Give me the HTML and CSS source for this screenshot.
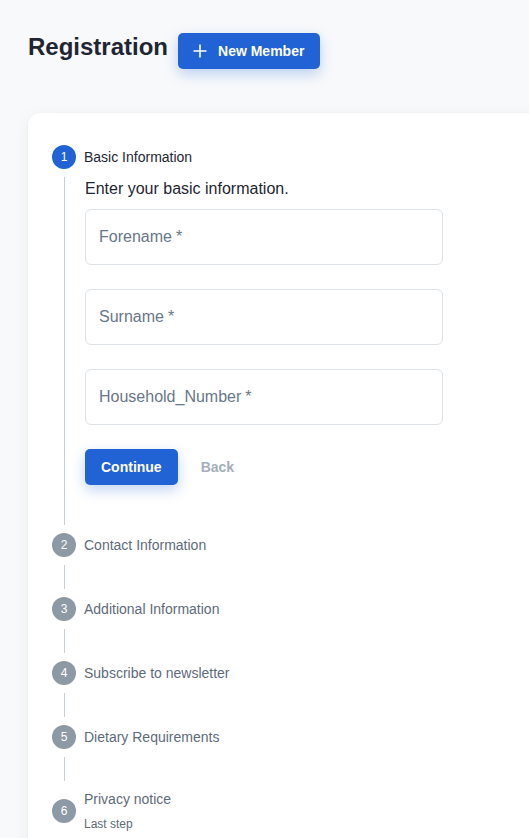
FILE: index.html
```html
<!DOCTYPE html>
<html lang="en">
<head>
<meta charset="utf-8">
<title>Registration</title>
<link rel="stylesheet" href="styles.css">
</head>
<body>
<div class="page">
  <header class="page-head">
    <h1 class="page-title">Registration</h1>
    <button class="btn btn-primary btn-new" type="button">
      <svg class="plus" viewBox="0 0 14 14" width="14" height="14" aria-hidden="true"><path d="M7 0.5V13.5M0.5 7H13.5" stroke="#fff" stroke-width="1.6" fill="none"/></svg>
      <span>New Member</span>
    </button>
  </header>

  <section class="card">
    <div class="step step-active">
      <div class="step-head"><span class="dot dot-active">1</span><div class="step-label">Basic Information</div></div>
      <div class="step-body">
        <p class="step-desc">Enter your basic information.</p>
        <div class="field"><span class="ph">Forename<span class="req">*</span></span></div>
        <div class="field"><span class="ph">Surname<span class="req">*</span></span></div>
        <div class="field"><span class="ph">Household_Number<span class="req">*</span></span></div>
        <div class="actions">
          <button class="btn btn-primary btn-continue" type="button">Continue</button>
          <button class="btn btn-text" type="button">Back</button>
        </div>
      </div>
    </div>
    <div class="step">
      <div class="step-head"><span class="dot">2</span><div class="step-label">Contact Information</div></div>
      <div class="step-body step-body-empty"></div>
    </div>
    <div class="step">
      <div class="step-head"><span class="dot">3</span><div class="step-label">Additional Information</div></div>
      <div class="step-body step-body-empty"></div>
    </div>
    <div class="step">
      <div class="step-head"><span class="dot">4</span><div class="step-label">Subscribe to newsletter</div></div>
      <div class="step-body step-body-empty"></div>
    </div>
    <div class="step">
      <div class="step-head"><span class="dot">5</span><div class="step-label">Dietary Requirements</div></div>
      <div class="step-body step-body-empty"></div>
    </div>
    <div class="step">
      <div class="step-head step-head-tall"><span class="dot">6</span>
        <div class="step-label">Privacy notice<div class="step-sub">Last step</div></div>
      </div>
    </div>
  </section>
</div>
</body>
</html>
```

FILE: styles.css
```css
html, body {
  margin: 0;
  padding: 0;
  overflow: hidden;
}
body {
  background: #f8f9fb;
  font-family: "Liberation Sans", Arial, sans-serif;
  color: #1f2430;
}
.page {
  padding: 33px 0 0 28px;
}
.page-head {
  display: flex;
  align-items: flex-start;
  gap: 10px;
}
.page-title {
  margin: 0;
  font-size: 24px;
  line-height: 28px;
  font-weight: 700;
  color: #1f2633;
}
.btn {
  font-family: "Liberation Sans", Arial, sans-serif;
  font-size: 14px;
  font-weight: 700;
  border: none;
  cursor: pointer;
  height: 36px;
  border-radius: 5px;
  display: inline-flex;
  align-items: center;
}
.btn-primary {
  background: #2163d5;
  color: #fff;
  box-shadow: 0 5px 14px rgba(33, 99, 213, 0.28);
}
.btn-new {
  padding: 0 16px 0 15px;
  gap: 11px;
}
.plus { display: block; }
.card {
  margin-top: 44px;
  width: 540px;
  background: #fff;
  border-radius: 12px;
  box-shadow: 0 0 2px rgba(20, 30, 50, 0.06), 0 4px 18px rgba(20, 30, 50, 0.05);
  padding: 32px 0 40px 24px;
  min-height: 760px;
}
.step-head {
  display: flex;
  align-items: center;
  gap: 8px;
  height: 24px;
}
.step-head-tall {
  height: 44px;
}
.dot {
  flex: none;
  width: 24px;
  height: 24px;
  border-radius: 50%;
  background: #8e99a6;
  color: #fff;
  font-size: 12px;
  line-height: 24px;
  text-align: center;
}
.dot-active {
  background: #2163d5;
}
.step-label {
  font-size: 14px;
  line-height: 20px;
  color: #5e6b7b;
}
.step-active .step-label {
  color: #1f2633;
}
.step-sub {
  font-size: 12px;
  line-height: 18px;
  margin-top: 6px;
  color: #5e6b7b;
}
.step-body {
  margin: 8px 0 8px 12px;
  border-left: 1px solid #c6ced8;
  padding: 0 0 40px 20px;
}
.step-body-empty {
  padding-bottom: 0;
  height: 24px;
}
.step-desc {
  margin: 0 0 8px;
  font-size: 16px;
  line-height: 24px;
  color: #1f2633;
}
.field {
  box-sizing: border-box;
  width: 358px;
  height: 56px;
  border: 1px solid #dde2e8;
  border-radius: 6px;
  display: flex;
  align-items: center;
  padding-left: 13px;
  margin-bottom: 24px;
}
.ph {
  font-size: 16px;
  color: #687789;
}
.req {
  margin-left: 4px;
}
.actions {
  display: flex;
  align-items: center;
  gap: 7px;
}
.btn-continue {
  padding: 0 16px;
}
.btn-text {
  background: transparent;
  color: #a4aebb;
  padding: 0 16px;
}
```
